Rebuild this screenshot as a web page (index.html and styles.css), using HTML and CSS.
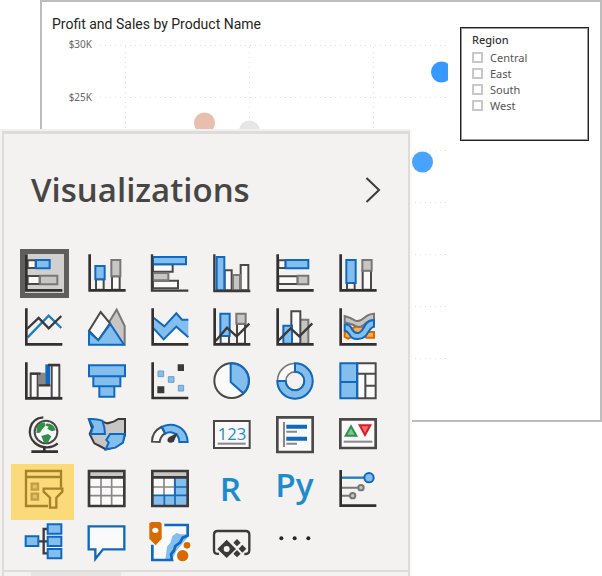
FILE: index.html
```html
<!DOCTYPE html>
<html lang="en">
<head>
<meta charset="utf-8">
<title>Profit and Sales by Product Name</title>
<link rel="stylesheet" href="styles.css">
</head>
<body>
<main class="report">
  <section class="chart">
    <h1 class="chart-title">Profit and Sales by Product Name</h1>
    <svg class="plot" viewBox="0 0 400 350" role="img" aria-label="Scatter chart">
      <g class="gridlines">
        <path d="M52 9.500H400M52 61.500H400M52 114.500H400M52 166.500H400M52 218.500H400M52 270.500H400M52 322.500H400"/>
        <path d="M77.500 11V322M201.500 11V322M325.500 11V322"/>
      </g>
      <g class="tick"><text x="44" y="12">$30K</text><text x="44" y="65">$25K</text></g>
      <circle cx="156.500" cy="87" r="10.500" fill="#e8bfae"/>
      <circle cx="201.500" cy="95" r="10.500" fill="#e6e6e6"/>
      <circle cx="393.500" cy="36" r="10.500" fill="#3599ff"/>
      <circle cx="374.500" cy="126" r="10.500" fill="#48a3ff"/>
    </svg>
  </section>
  <fieldset class="slicer">
    <legend>Region</legend>
    <label><input type="checkbox">Central</label>
    <label><input type="checkbox">East</label>
    <label><input type="checkbox">South</label>
    <label><input type="checkbox">West</label>
  </fieldset>
</main>

<aside class="panel">
  <div class="panel-body">
    <header class="panel-head">
      <h2>Visualizations</h2>
      <button class="collapse" aria-label="Collapse"><svg viewBox="0 0 16 28"><path d="M1.500 2L14 14L1.500 26"/></svg></button>
    </header>
    <div class="visuals">
      <button class="visual selected" aria-label="Stacked bar chart"><svg viewBox="46 42 114 114"><path class="w" d="M54 61H78V84H54zM54 108H90V132H54z"/><path class="b" d="M79 60H120V85H79z"/><path class="g" d="M91 107H143V133H91z"/><path class="axis" d="M50 43V151H158"/></svg></button>
      <button class="visual" aria-label="Stacked column chart"><svg viewBox="234 42 114 114"><path class="w" d="M258 118H281V149H258zM306 109H329V149H306z"/><path class="b" d="M256 78H284V118H256z"/><path class="g" d="M304 60H331V109H304z"/><path class="axis" d="M239 43V151H347"/></svg></button>
      <button class="visual" aria-label="Clustered bar chart"><svg viewBox="32 42 114 114"><path class="w" d="M38 73H97V95H38zM38 122H113V145H38z"/><path class="g" d="M38 99H84V121H38z"/><path class="b" d="M38 51H137V73H38z"/><path class="thin" d="M35 43V152H144"/></svg></button>
      <button class="visual" aria-label="Clustered column chart"><svg viewBox="220 42 114 114"><path class="w" d="M255 91H276V151H255zM303 75H326V151H303z"/><path class="g" d="M280 105H301V151H280z"/><path class="b" d="M231 51H254V151H231z"/><path class="thin" d="M224 43V153H332"/></svg></button>
      <button class="visual" aria-label="100% stacked bar chart"><svg viewBox="33 42 114 114"><path class="w" d="M40 61H62V84H40zM40 109H98V132H40z"/><path class="b" d="M62 60H130V85H62z"/><path class="g" d="M98 107H130V133H98z"/><path class="axis" d="M38 43V151H146"/></svg></button>
      <button class="visual" aria-label="100% stacked column chart"><svg viewBox="221 42 114 114"><path class="w" d="M245 129H268V149H245zM292 91H317V149H292z"/><path class="b" d="M243 60H271V129H243z"/><path class="g" d="M291 60H319V92H291z"/><path class="axis" d="M226 43V151H334"/></svg></button>

      <button class="visual" aria-label="Line chart"><svg viewBox="46 204 114 114"><path class="blue-line" d="M54 292L117 227L155 264"/><path class="thin" d="M52 267L87 234L117 265L155 228"/><path class="axis" d="M50 205V313H158"/></svg></button>
      <button class="visual" aria-label="Area chart"><svg viewBox="234 204 114 114"><path class="g" d="M296 248L320 209L344 258V313H300z"/><path class="w" d="M237 272L272 216L300 250L265 301z"/><path class="b" d="M237 276L265 301L301 252L342 314H237z"/></svg></button>
      <button class="visual" aria-label="Stacked area chart"><svg viewBox="32 204 114 114"><path class="plain" d="M37 262L70 298L108 260L144 292V311H37z"/><path fill="#83beec" d="M37 231L72 259L108 220L125 239H144V292L108 260L70 298L37 262z"/><path class="deep" d="M37 231L72 259L108 220L125 239H144M37 262L70 298L108 260L144 292"/><path class="axis" d="M37 205V313H144"/></svg></button>
      <button class="visual" aria-label="Line and stacked column chart"><svg viewBox="220 204 114 114"><path class="w" d="M243 288H268V311H243zM292 251H316V311H292z"/><path class="b" d="M242 221H270V288H242z"/><path class="g" d="M290 221H318V251H290z"/><path class="thin" d="M228 303L262 263L291 289L329 251"/><path class="axis" d="M225 205V313H332"/></svg></button>
      <button class="visual" aria-label="Line and clustered column chart"><svg viewBox="33 204 114 114"><path class="g" d="M105 239H130V311H105z"/><path class="w" d="M79 214H106V311H79z"/><path class="b" d="M55 257H81V311H55z"/><path class="thin" d="M40 302L77 265L103 289L142 250"/><path class="axis" d="M38 205V313H146"/></svg></button>
      <button class="visual" aria-label="Ribbon chart"><svg viewBox="221 204 114 114"><path class="o" d="M238 276H252Q264 258 282 258Q296 260 305 276H326V293H304L280 281L248 296L238 291z"/><path class="g" d="M238 228Q256 233 270 242Q283 247 297 233Q309 222 326 221V240Q309 240 295 255Q280 267 263 254L238 247z"/><path class="b" d="M238 253Q255 253 260 268Q269 284 283 277C299 271 295 240 326 241V260C308 261 311 296 278 297C248 299 256 273 238 272z"/><path class="axis" d="M226 205V313H334"/></svg></button>

      <button class="visual" aria-label="Waterfall chart"><svg viewBox="46 36 114 114"><path class="w" d="M63 71H84V143H63zM126 46H149V143H126z"/><path fill="#8a8886" d="M88 68H108V105H88z"/><path fill="#1068bf" d="M107 43H121V105H107z"/><path class="thin" d="M61 71H93M115 45H151M87 106H122"/><path class="axis" d="M50 37V145H158"/></svg></button>
      <button class="visual" aria-label="Funnel chart"><svg viewBox="234 36 114 114"><path class="b" d="M237 46H345V79H237zM250 79H331V109H250zM268 109H313V140H268z"/></svg></button>
      <button class="visual" aria-label="Scatter chart"><svg viewBox="32 36 114 114"><path fill="#3b3a39" d="M112 43H131V63H112zM51 109H72V130H51z"/><path class="dots" d="M53 63H70V80H53zM84 80H101V97H84zM114 106H130V123H114z"/><path class="axis" d="M37 37V144H144"/></svg></button>
      <button class="visual" aria-label="Pie chart"><svg viewBox="220 36 114 114"><circle class="w" cx="276" cy="92" r="52"/><path class="b" d="M273 40A52 52 0 0 1 311 130L273 96z"/></svg></button>
      <button class="visual" aria-label="Donut chart"><svg viewBox="33 36 114 114"><circle cx="90" cy="93" r="40" fill="none" stroke="#797775" stroke-width="30"/><circle cx="90" cy="93" r="40" fill="none" stroke="#fafafa" stroke-width="20"/><path class="b" d="M90 40A53 53 0 1 1 37 93H62A28 28 0 1 0 90 65z"/></svg></button>
      <button class="visual" aria-label="Treemap"><svg viewBox="221 36 114 114"><path class="w" d="M276 40H331V145H276zM276 71H331M300 71V145M300 107H331"/><path class="b" d="M225 40H275V145H225zM225 96H275"/></svg></button>

      <button class="visual" aria-label="Map"><svg viewBox="46 198 114 114"><circle class="w" cx="109" cy="246" r="34"/><path fill="#309048" d="M82 230Q93 215 106 218L107 227L98 237L91 248L80 249zM109 221Q132 219 138 241L126 244L113 236L117 230L108 227zM95 258L115 252L125 259L116 276L103 278z"/><path class="thin" d="M101 202C57 205 49 256 76 279C98 298 129 294 144 280"/><path class="axis" d="M104 290V304M65 305H145"/></svg></button>
      <button class="visual" aria-label="Filled map"><svg viewBox="234 198 114 114"><path class="g dark" d="M237 208L270 212L292 220L311 215L325 207H345V255L338 277L316 291L288 298L269 288L253 280L239 252L246 235z"/><path class="b" d="M237 208Q254 205 277 212L283 232L285 252H242L249 230zM300 252H344L339 278L316 293L287 298L296 278L289 270z"/></svg></button>
      <button class="visual" aria-label="Gauge"><svg viewBox="32 198 114 114"><path class="w" d="M35 275Q35 245 63 231L74 250Q60 259 58 276z"/><path class="b" d="M65 230Q99 215 125 237Q141 251 142 276H117Q116 251 92 247Q81 246 75 251z"/><path fill="#3b3a39" d="M112 248L101 274Q90 283 82 274Q79 266 88 260z"/></svg></button>
      <button class="visual" aria-label="Card"><svg viewBox="220 198 114 114"><path class="w" d="M223 213H330V294H223z"/><text class="card-text" x="277" y="270">123</text><path class="rule" d="M234 281H318"/></svg></button>
      <button class="visual" aria-label="Multi-row card"><svg viewBox="33 198 114 114"><path class="w frame" d="M37 202H143V306H37z"/><path class="rule" d="M57 216V291M64 245H96M64 281H96"/><path d="M64 230H126M64 266H126" stroke="#1068bf" stroke-width="12"/></svg></button>
      <button class="visual" aria-label="KPI"><svg viewBox="221 198 114 114"><path class="w frame" d="M225 208H331V294H225z"/><path fill="#85c397" stroke="#309048" stroke-width="6" d="M257 229L273 257H241z"/><path fill="#ff6b70" stroke="#d81b24" stroke-width="6" d="M283 226H315L299 255z"/><path class="rule" d="M235 275H321"/></svg></button>

      <button class="visual marked" aria-label="Slicer"><svg viewBox="78 45 114 114"><path class="olive" d="M147 153H81V48H186V98M81 66H186"/><path class="olive soft" d="M98 86H117V104H98zM98 116H117V134H98z"/><path class="olive fill" d="M134 101H190V110L172 128V158H153V128L134 110z"/></svg></button>
      <button class="visual" aria-label="Table"><svg viewBox="265 45 114 114"><path class="plain" d="M268 48H374V153H268z"/><path fill="#c8c6c4" d="M268 48H374V65H268z"/><path class="cells" d="M304 67V153M336 67V153M268 96H374M268 122H374"/><path class="line" d="M268 67H374M268 48H374V153H268z"/></svg></button>
      <button class="visual" aria-label="Matrix"><svg viewBox="32 45 114 114"><path class="plain" d="M36 48H142V153H36z"/><path fill="#c8c6c4" d="M36 48H142V66H36z"/><path fill="#83beec" d="M104 68H142V153H36V123H104z"/><path class="cells" d="M71 67V121M103 67V121M36 96H103"/><path d="M36 121H142M104 96H142M104 70V153M72 121V153" fill="none" stroke="#1068bf" stroke-width="5"/><path class="line" d="M36 67H142M36 48H142V153H36z"/></svg></button>
      <button class="visual" aria-label="R script visual"><svg viewBox="220 45 114 114"><text class="script" x="272" y="137">R</text></svg></button>
      <button class="visual" aria-label="Python visual"><svg viewBox="33 45 114 114"><text class="script" x="88" y="125">Py</text></svg></button>
      <button class="visual" aria-label="Key influencers"><svg viewBox="221 45 114 114"><path class="blue-line" d="M229 68H298"/><path class="gray-line" d="M229 98H279M229 122H255"/><circle class="b" cx="311" cy="68" r="14"/><g class="g"><circle cx="287" cy="98" r="8"/><circle cx="262" cy="122" r="8"/></g><path class="axis" d="M226 45V152H333"/></svg></button>

      <button class="visual" aria-label="Decomposition tree"><svg viewBox="78 207 114 114"><path class="thin" d="M120 259H147M147 222H134V295H147"/><path class="b" d="M80 244H118V273H80zM146 208H187V236H146zM146 245H187V273H146zM146 282H187V310H146z"/></svg></button>
      <button class="visual" aria-label="Smart narrative"><svg viewBox="265 207 114 114"><path class="plain deep-edge" d="M267 214H374V283H310L287 312V283H267z"/></svg></button>
      <button class="visual" aria-label="ArcGIS map"><svg viewBox="32 207 114 114"><path fill="#fafafa" d="M35 208H142V317H35z"/><path fill="#83beec" d="M96 244L108 234L121 238H142V260L110 285L94 316H75L80 275L90 263z"/><path d="M36 269V315H77M72 210H142V242L127 248L119 263L105 273L101 286L92 298L95 315H75" fill="none" stroke="#1068bf" stroke-width="8"/><path fill="#fafafa" d="M112 282L142 248H150V320H105z"/><path fill="#d86a00" d="M27 204L34 201H59L64 206V251L46 271L27 251z"/><ellipse cx="45" cy="226" rx="9" ry="8" fill="#fff"/><circle cx="127" cy="302" r="17" fill="#d86a00"/><circle cx="140" cy="271" r="10" fill="#d86a00"/></svg></button>
      <button class="visual" aria-label="Power Apps"><svg viewBox="220 207 114 114"><path class="thin" d="M238 296Q223 299 223 286V239Q223 228 234 228H318Q329 228 329 239V286Q329 298 314 297"/><path fill="#3b3a39" d="M261 254L289 282L261 309L233 282zM292 252L303 263L292 274L281 263zM308 269L320 281L308 293L297 281zM292 285L303 296L292 307L281 296z"/><circle cx="261" cy="282" r="9" fill="#f3f2f1"/></svg></button>
      <button class="visual" aria-label="More visuals"><svg viewBox="33 207 114 114"><g fill="#252423"><circle cx="49" cy="250" r="6"/><circle cx="89" cy="250" r="6"/><circle cx="130" cy="250" r="6"/></g></svg></button>
    </div>
    <div class="tabs"><span class="tab"></span></div>
  </div>
</aside>
</body>
</html>
```
FILE: styles.css
```css
*, *::before { box-sizing: border-box; }
body {
  margin: 0;
  min-height: 576px;
  position: relative;
  background: #fff;
  color: #252423;
  font-family: "Noto Sans", "Open Sans", sans-serif;
}

.report {
  display: flex;
  justify-content: space-between;
  align-items: flex-start;
  margin-left: 40px;
  min-height: 422px;
  padding: 12px 11px 0 6px;
  border: 2px solid #bdbdbd;
}
.chart { width: 400px; }
.chart-title {
  margin: 0 0 2px 4px;
  font: 400 14px/20px Roboto, sans-serif;
}
.plot { display: block; width: 100%; }
.gridlines path {
  fill: none;
  stroke: #dedede;
  stroke-width: 1;
  stroke-dasharray: 1 4;
}
.tick text { font-size: 10px; fill: #666; text-anchor: end; }

.slicer {
  width: 129px;
  height: 114px;
  margin: 13px 0 0;
  padding: 5px 11px;
  border: 1px solid #222;
  outline: 1px solid #999;
  outline-offset: -2px;
  color: #555;
  font-size: 11px;
}
.slicer legend {
  float: left;
  width: 100%;
  padding: 0;
  color: #333;
  font-weight: 500;
  line-height: 14px;
  margin-bottom: 2px;
}
.slicer label {
  display: flex;
  clear: both;
  align-items: center;
  gap: 7px;
  height: 16px;
}
.slicer input {
  appearance: none;
  width: 11px;
  height: 11px;
  margin: 0;
  border: 2px solid #c8c8c8;
  background: #fff;
}

.panel {
  position: absolute;
  top: 129px;
  left: 0;
  width: 412px;
  height: 447px;
  padding-left: 2px;
  overflow: hidden;
  border-top: 2px solid #f0f0f0;
  background: #f3f2f1;
  border-right: 2px solid #fafafa;
}
.panel-body {
  border: solid #dddcdb;
  border-width: 3px 2px 0;
}
.panel-head {
  display: flex;
  justify-content: space-between;
  align-items: center;
  height: 112px;
  padding: 0 27px;
}
.panel-head h2 {
  margin: 0;
  color: #484644;
  font: 600 33px/40px "Open Sans", sans-serif;
}
button {
  padding: 0;
  border: 0;
  background: none;
}
.collapse svg { display: block; width: 16px; height: 28px; }
.collapse path { fill: none; stroke: #3b3a39; stroke-width: 2; }

.visuals {
  display: grid;
  grid-template-columns: repeat(6, 1fr);
  grid-auto-rows: 54px;
  padding: 0 19px 0 9px;
}
.visual {
  display: grid;
  place-items: center;
  position: relative;
}
.visual svg {
  display: block;
  position: relative;
  width: 38px;
  height: 38px;
  overflow: visible;
}
.selected::before {
  content: "";
  position: absolute;
  width: 49px;
  height: 49px;
  border: 5px solid #5f5e5c;
  background: #d2d0ce;
}
.marked::before {
  content: "";
  position: absolute;
  inset: 2px 2px -4px -2px;
  background: #fbda79;
}

.w { fill: #fafafa; stroke: #4a4948; stroke-width: 6; }
.b { fill: #83beec; stroke: #1068bf; stroke-width: 6; }
.g { fill: #c8c6c4; stroke: #797775; stroke-width: 6; }
.o { fill: #ffad45; stroke: #d86a00; stroke-width: 6; }
.frame { stroke-width: 8; }
.dark { stroke: #3b3a39; }
.plain { fill: #fafafa; }
.axis { fill: none; stroke: #323130; stroke-width: 8; }
.thin { fill: none; stroke: #3b3a39; stroke-width: 7; }
.line { fill: none; stroke: #3b3a39; stroke-width: 8; }
.cells { fill: none; stroke: #8a8886; stroke-width: 5; }
.deep { fill: none; stroke: #1068bf; stroke-width: 6; }
.deep-edge { stroke: #1068bf; stroke-width: 7; }
.blue-line { fill: none; stroke: #1e7fba; stroke-width: 7; }
.gray-line { fill: none; stroke: #797775; stroke-width: 6; }
.rule { fill: none; stroke: #8a8886; stroke-width: 6; }
.dots { fill: #83beec; stroke: #6b9fc8; stroke-width: 3; }
.olive { fill: none; stroke: #a5832b; stroke-width: 7; }
.olive.soft { fill: #e3c068; stroke: #c19e43; }
.olive.fill { fill: #fbda79; }
.card-text {
  fill: #1e8bcd;
  font: 400 50px "Open Sans", sans-serif;
  text-anchor: middle;
}
.script {
  fill: #1e8bcd;
  font: 600 100px "Open Sans", sans-serif;
  text-anchor: middle;
}

.tabs {
  height: 6px;
  border-top: 2px solid #dddcdb;
}
.tab {
  display: block;
  width: 90px;
  height: 4px;
  margin-left: 27px;
  background: #e6e5e4;
}
```
